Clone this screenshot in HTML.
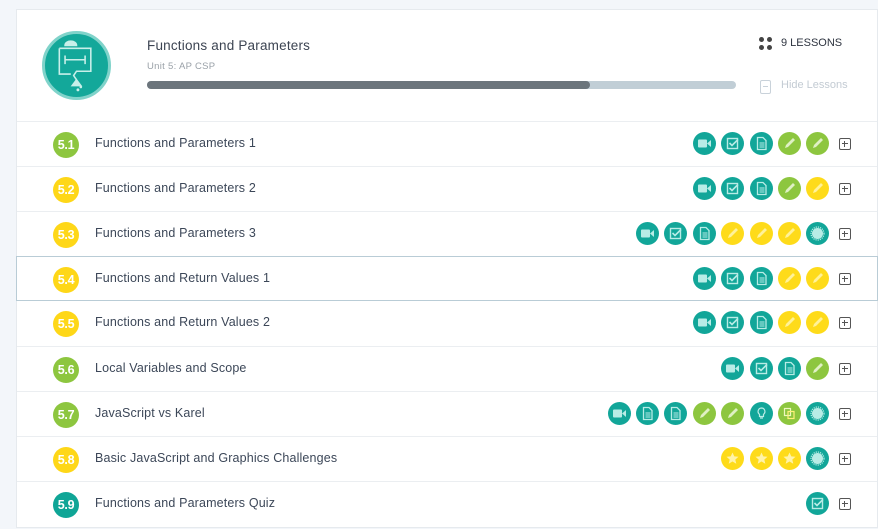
<!DOCTYPE html>
<html><head><meta charset="utf-8">
<style>
*{box-sizing:border-box;margin:0;padding:0}
body{width:878px;height:529px;background:#f3f6fa;font-family:"Liberation Sans",sans-serif;position:relative;overflow:hidden}
.card{position:absolute;left:16px;top:9px;width:862px;height:519px;background:#fff;border:1px solid #e6eaee}
.logo{position:absolute;left:25px;top:21px;width:69px;height:69px;border-radius:50%;background:#13a89a;border:3px solid #80d3ca}
.title{position:absolute;left:130px;top:28px;font-size:13.5px;color:#3c4452;letter-spacing:.2px}
.unit{position:absolute;left:130px;top:51px;font-size:9.5px;color:#9aa1a8;letter-spacing:.3px}
.bar{position:absolute;left:130px;top:71px;width:589px;height:8px;border-radius:4px;background:#c1ced6}
.bar div{width:443px;height:8px;border-radius:4px;background:#6c757c}
.lessons{position:absolute;left:764px;top:27px;font-size:11px;color:#2e3440}
.dots{position:absolute;left:742px;top:27px;width:14px;height:14px}
.dots i{position:absolute;width:5px;height:5px;border-radius:50%;background:#444}
.hide{position:absolute;left:764px;top:69px;font-size:11px;color:#c3cbd3}
.hideic{position:absolute;left:743px;top:70px;width:11px;height:14px;border:1.3px solid #c9d2da;border-radius:2px}
.hideic:after{content:"";position:absolute;left:2px;top:5px;width:5px;height:1.3px;background:#c9d2da}
.row{position:absolute;left:0;width:860px;height:45px;border-top:1px solid #ebeef1}
.row.hl{border:1px solid #b9ccd6;left:-1px;width:862px}
.badge{position:absolute;left:36px;top:10px;width:26px;height:26px;border-radius:50%;color:#fff;font-size:12.5px;font-weight:bold;text-align:center;line-height:26px;letter-spacing:-.3px}
.name{position:absolute;left:78px;top:14px;font-size:12.5px;color:#3c4758;letter-spacing:.15px}
.ic{position:absolute;top:10px;width:23px;height:23px;border-radius:50%}
.ic svg{position:absolute;left:0;top:0}
.t{background:#12a699}.g{background:#8dc63f}.y{background:#fedb1a}
.plus{position:absolute;left:822px;top:16px;width:12px;height:12px;border:1.3px solid #555;border-radius:2px}
.plus:before{content:"";position:absolute;left:1.5px;top:4.2px;width:6.5px;height:1.3px;background:#555}
.plus:after{content:"";position:absolute;left:4.2px;top:1.5px;width:1.3px;height:6.5px;background:#555}
.gr{background:#8dc63f}.ye{background:#fed718}.te{background:#0fa596}
</style></head><body>
<svg width="0" height="0" style="position:absolute">
<defs>
<symbol id="v" viewBox="0 0 23 23"><rect x="5" y="7.5" width="9" height="8" rx="1" fill="#b8ece6"/><path d="M14 11.5l4-3.5v7z" fill="#b8ece6"/></symbol>
<symbol id="c" viewBox="0 0 23 23"><rect x="6.5" y="6.5" width="10" height="10" fill="none" stroke="#b8ece6" stroke-width="1.4"/><path d="M8.5 11l2.5 2.5 6-6" fill="none" stroke="#b8ece6" stroke-width="1.6"/></symbol>
<symbol id="d" viewBox="0 0 23 23"><path d="M7.5 5.5h5.5l3 3v9h-8.5z" fill="none" stroke="#b8ece6" stroke-width="1.3"/><path d="M9.5 11h5M9.5 13h5M9.5 15h5" stroke="#b8ece6" stroke-width="1"/></symbol>
<symbol id="p" viewBox="0 0 23 23"><path d="M7 16l1-3 7-7 2 2-7 7z" fill="#fff6b0" opacity=".85"/></symbol>
<symbol id="pg" viewBox="0 0 23 23"><path d="M7 16l1-3 7-7 2 2-7 7z" fill="#dff0c4"/></symbol>
<symbol id="b" viewBox="0 0 23 23"><circle cx="11.5" cy="11.5" r="5.5" fill="#b8ece6"/><circle cx="11.5" cy="11.5" r="6.5" fill="none" stroke="#b8ece6" stroke-width="1.2" stroke-dasharray="1.2 1"/></symbol>
<symbol id="s" viewBox="0 0 23 23"><path d="M11.5 5.5l1.8 3.9 4.2.4-3.2 2.8 1 4.1-3.8-2.2-3.8 2.2 1-4.1-3.2-2.8 4.2-.4z" fill="#fff3a8"/></symbol>
<symbol id="l" viewBox="0 0 23 23"><path d="M11.5 6a3.5 3.5 0 0 0-2 6.3v2.2h4v-2.2a3.5 3.5 0 0 0-2-6.3zM10 16h3" fill="none" stroke="#b8ece6" stroke-width="1.2"/></symbol>
<symbol id="k" viewBox="0 0 23 23"><rect x="6.5" y="6.5" width="6" height="7" fill="none" stroke="#eef7c0" stroke-width="1.2"/><rect x="10" y="9.5" width="6" height="7" fill="none" stroke="#fff27a" stroke-width="1.2"/></symbol>
</defs></svg>
<div class="card">
 <div class="logo"><svg width="63" height="63" viewBox="10 6 44 44"><g fill="none" stroke="#c8efe9" stroke-width="1.1"><path d="M20 16h22v16H32l-2 3 2 3"/><path d="M20 16v18h8"/><path d="M24 24h14M24 21v6M38 21v6"/><path d="M24 14c0-4 8-4 8 0z" fill="#c8efe9"/><path d="M32 38l-3 4h6z" fill="#c8efe9"/></g><circle cx="33" cy="45" r="1" fill="#c8efe9"/><circle cx="35" cy="43" r=".9" fill="#c8efe9"/></svg></div>
 <div class="title">Functions and Parameters</div>
 <div class="unit">Unit 5: AP CSP</div>
 <div class="bar"><div></div></div>
 <div class="dots"><i style="left:0;top:0"></i><i style="left:8px;top:0"></i><i style="left:0;top:8px"></i><i style="left:8px;top:8px"></i></div>
 <div class="lessons">9 LESSONS</div>
 <div class="hideic"></div><div class="hide">Hide Lessons</div>

 <div class="row" style="top:111px"><div class="badge gr">5.1</div><div class="name">Functions and Parameters 1</div>
  <div class="ic t" style="left:676px"><svg width="23" height="23"><use href="#v"/></svg></div>
  <div class="ic t" style="left:704px"><svg width="23" height="23"><use href="#c"/></svg></div>
  <div class="ic t" style="left:733px"><svg width="23" height="23"><use href="#d"/></svg></div>
  <div class="ic g" style="left:761px"><svg width="23" height="23"><use href="#pg"/></svg></div>
  <div class="ic g" style="left:789px"><svg width="23" height="23"><use href="#pg"/></svg></div>
  <div class="plus"></div></div>

 <div class="row" style="top:156px"><div class="badge ye">5.2</div><div class="name">Functions and Parameters 2</div>
  <div class="ic t" style="left:676px"><svg width="23" height="23"><use href="#v"/></svg></div>
  <div class="ic t" style="left:704px"><svg width="23" height="23"><use href="#c"/></svg></div>
  <div class="ic t" style="left:733px"><svg width="23" height="23"><use href="#d"/></svg></div>
  <div class="ic g" style="left:761px"><svg width="23" height="23"><use href="#pg"/></svg></div>
  <div class="ic y" style="left:789px"><svg width="23" height="23"><use href="#p"/></svg></div>
  <div class="plus"></div></div>

 <div class="row" style="top:201px"><div class="badge ye">5.3</div><div class="name">Functions and Parameters 3</div>
  <div class="ic t" style="left:619px"><svg width="23" height="23"><use href="#v"/></svg></div>
  <div class="ic t" style="left:647px"><svg width="23" height="23"><use href="#c"/></svg></div>
  <div class="ic t" style="left:676px"><svg width="23" height="23"><use href="#d"/></svg></div>
  <div class="ic y" style="left:704px"><svg width="23" height="23"><use href="#p"/></svg></div>
  <div class="ic y" style="left:733px"><svg width="23" height="23"><use href="#p"/></svg></div>
  <div class="ic y" style="left:761px"><svg width="23" height="23"><use href="#p"/></svg></div>
  <div class="ic t" style="left:789px"><svg width="23" height="23"><use href="#b"/></svg></div>
  <div class="plus"></div></div>

 <div class="row hl" style="top:246px"><div class="badge ye" style="left:36px">5.4</div><div class="name" style="left:78px">Functions and Return Values 1</div>
  <div class="ic t" style="left:676px"><svg width="23" height="23"><use href="#v"/></svg></div>
  <div class="ic t" style="left:704px"><svg width="23" height="23"><use href="#c"/></svg></div>
  <div class="ic t" style="left:733px"><svg width="23" height="23"><use href="#d"/></svg></div>
  <div class="ic y" style="left:761px"><svg width="23" height="23"><use href="#p"/></svg></div>
  <div class="ic y" style="left:789px"><svg width="23" height="23"><use href="#p"/></svg></div>
  <div class="plus" style="left:822px"></div></div>

 <div class="row" style="top:291px;border-top:none"><div class="badge ye">5.5</div><div class="name">Functions and Return Values 2</div>
  <div class="ic t" style="left:676px"><svg width="23" height="23"><use href="#v"/></svg></div>
  <div class="ic t" style="left:704px"><svg width="23" height="23"><use href="#c"/></svg></div>
  <div class="ic t" style="left:733px"><svg width="23" height="23"><use href="#d"/></svg></div>
  <div class="ic y" style="left:761px"><svg width="23" height="23"><use href="#p"/></svg></div>
  <div class="ic y" style="left:789px"><svg width="23" height="23"><use href="#p"/></svg></div>
  <div class="plus"></div></div>

 <div class="row" style="top:336px"><div class="badge gr">5.6</div><div class="name">Local Variables and Scope</div>
  <div class="ic t" style="left:704px"><svg width="23" height="23"><use href="#v"/></svg></div>
  <div class="ic t" style="left:733px"><svg width="23" height="23"><use href="#c"/></svg></div>
  <div class="ic t" style="left:761px"><svg width="23" height="23"><use href="#d"/></svg></div>
  <div class="ic g" style="left:789px"><svg width="23" height="23"><use href="#pg"/></svg></div>
  <div class="plus"></div></div>

 <div class="row" style="top:381px"><div class="badge gr">5.7</div><div class="name">JavaScript vs Karel</div>
  <div class="ic t" style="left:591px"><svg width="23" height="23"><use href="#v"/></svg></div>
  <div class="ic t" style="left:619px"><svg width="23" height="23"><use href="#d"/></svg></div>
  <div class="ic t" style="left:647px"><svg width="23" height="23"><use href="#d"/></svg></div>
  <div class="ic g" style="left:676px"><svg width="23" height="23"><use href="#pg"/></svg></div>
  <div class="ic g" style="left:704px"><svg width="23" height="23"><use href="#pg"/></svg></div>
  <div class="ic t" style="left:733px"><svg width="23" height="23"><use href="#l"/></svg></div>
  <div class="ic g" style="left:761px"><svg width="23" height="23"><use href="#k"/></svg></div>
  <div class="ic t" style="left:789px"><svg width="23" height="23"><use href="#b"/></svg></div>
  <div class="plus"></div></div>

 <div class="row" style="top:426px"><div class="badge ye">5.8</div><div class="name">Basic JavaScript and Graphics Challenges</div>
  <div class="ic y" style="left:704px"><svg width="23" height="23"><use href="#s"/></svg></div>
  <div class="ic y" style="left:733px"><svg width="23" height="23"><use href="#s"/></svg></div>
  <div class="ic y" style="left:761px"><svg width="23" height="23"><use href="#s"/></svg></div>
  <div class="ic t" style="left:789px"><svg width="23" height="23"><use href="#b"/></svg></div>
  <div class="plus"></div></div>

 <div class="row" style="top:471px"><div class="badge te">5.9</div><div class="name">Functions and Parameters Quiz</div>
  <div class="ic t" style="left:789px"><svg width="23" height="23"><use href="#c"/></svg></div>
  <div class="plus"></div></div>
</div>
</body></html>
